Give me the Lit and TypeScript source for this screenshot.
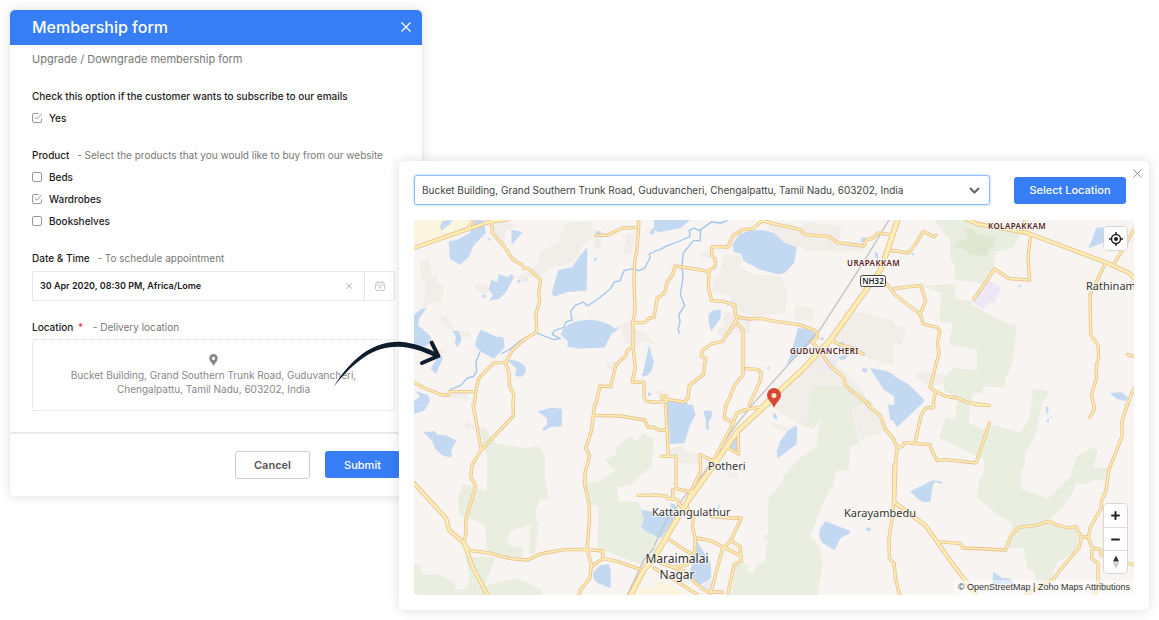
import { LitElement, html, svg, css } from "lit";
import { customElement } from "lit/decorators.js";

type Piece = [x: number, y: number, d: string];

/* Map geometry, kept per sector: offset of the sector, then the path in it (three units per pixel). */
const A: [number, number] = [0, 0];
const B: [number, number] = [720, 0];
const C: [number, number] = [1440, 0];
const D: [number, number] = [0, 570];
const E: [number, number] = [720, 570];
const F: [number, number] = [1440, 570];

const sand: Piece[] = [
  [...A, "M0 16H235L170 45L0 95Z"],
  [...D, "M665 545L720 552V580H650Z"],
  [...E, "M0 525L60 545L95 575H0Z"],
];

const built: Piece[] = [
  [...A, "M18 138L44 132L52 178L70 180L68 208L88 212L86 262L60 264L26 280L36 206L22 196Z"],
  [...A, "M182 212L196 206L222 212L224 234L212 238L186 228Z"],
  [...A, "M75 300L98 300L102 320L118 326L116 348L86 330Z M143 348L171 350L169 369L141 365Z M20 405L96 402L94 415L60 430L20 418Z"],
  [...A, "M455 25L535 18V70L505 92L490 128L455 152L410 158L385 180L340 192L322 206L308 190L350 166L372 148L380 108L430 88Z"],
  [...A, "M232 28L262 20L305 32L275 50L272 85L255 92L240 62Z M536 45L566 50L560 100L540 100Z M640 55L662 60L652 120L626 122Z"],
  [...A, "M622 330L650 315L662 345L690 355L720 380V390L690 380L670 390L632 385Z M578 440L604 440L606 462L575 462Z"],
  [...A, "M98 532L160 535L168 556L105 548Z"],
  [...B, "M330 22L400 25L440 40L455 22L560 35L555 80L620 82L630 110L560 112L455 108L440 95L400 105Z"],
  [...B, "M140 110H166L170 135L140 128Z M212 118L262 125L260 160L300 180L382 186L398 230L396 296L340 300L300 306L228 280L232 245L176 232L176 195L196 180Z"],
  [...B, "M210 290L290 312L288 358L262 350L212 366L190 362L190 340L208 335Z M424 272L480 280L476 322L420 315Z"],
  [...B, "M575 290L640 296L720 320V450L690 445L640 430L560 380L535 370Z"],
  [...B, "M480 420L520 430L570 470L620 520L650 570H360L380 540L430 500Z"],
  [...C, "M0 332L36 340L22 392L0 385Z M60 488L80 470L150 480L148 505L120 515L100 508Z"],
  [...B, "M5 526L25 525V540L5 540Z"],
  [...D, "M150 62L160 48L182 68L185 72L160 76Z"],
  [...E, "M40 135L85 122L95 140L135 145L132 180L66 175Z M222 200L252 205L248 222L222 218Z M350 52L402 68L398 82L355 66Z"],
  [...E, "M345 0H470L452 65L400 40Z M590 0H640L690 60V82L618 105Z"],
];

const green: Piece[] = [
  [...B, "M465 515L600 515L660 570H465Z"],
  [...C, "M122 16H220L250 30L380 55L358 100L305 110L300 160L282 208L184 195L182 160L168 125V75Z"],
  [...C, "M80 215L184 208V252L236 260L230 270L350 330L369 332L352 455L338 480L330 518L270 515L262 538L236 535L232 570H190L188 550L150 525L148 490L178 460L248 466L250 408L165 388L176 326L136 320L140 232Z"],
  [...C, "M418 522L468 530L440 570H410Z"],
  [...D, "M195 70L212 68L245 115L330 130L375 125L393 155V230L404 285L378 284L366 320V350L375 353L362 450L345 445L350 360L288 378L280 420L328 430L325 458L280 462L218 442L214 360L136 332L132 280L148 238L218 260L220 160Z"],
  [...D, "M155 458L243 458L212 545L310 520L384 555V580H0V477L20 482L22 510L70 508L120 530L125 555L160 550L166 515Z"],
  [...D, "M572 165L608 150L604 132L648 94L670 112L686 84L720 100L712 195L690 200L650 242L608 248L614 290L672 292L690 325L720 400V480L690 482L550 430L553 305L525 300V270L502 228L548 233L602 198Z"],
  [...E, "M0 402L15 400L5 450H0Z"],
  [...E, "M470 0H590L618 122L588 124L585 196L548 198L535 252L525 255L468 395L498 430L505 480L490 580H230L242 480L285 478L280 500L300 508L310 478L332 476L340 405L322 410L342 385L342 300L346 275L384 235L388 215L430 165L488 128L500 40L480 70L452 66Z"],
  [...F, "M186 0H228L225 56L270 75L300 60L380 85L405 45L410 0H445L422 95L395 145L392 185L380 195V252L462 282L530 215L548 155L596 128L612 138L598 188L644 190L640 228L602 225L575 240L545 235L540 260L490 325L460 345L545 375L552 392L550 440L492 470L478 495V535H425L422 500L400 492L388 430L345 432L355 355L310 330L250 280L255 225L270 205V165L136 98L155 38L186 45Z"],
];

const darkGreen: Piece[] = [
  [...C, "M210 40L240 44L246 55L306 70L298 98L285 105L280 125L230 120L215 105L180 95L200 75L214 76L222 58Z"],
];

const pale: Piece[] = [
  [...C, "M282 198L322 218L302 266L290 262L265 284L236 262Z"],
  [...B, "M520 425L545 422L552 440L530 468L498 465L510 440Z"],
  [...E, "M145 545L165 525L175 532L168 562L140 558Z"],
];

const water: Piece[] = [
  [...A, "M85 20L115 16L108 28L82 48L78 36Z M182 14H207L216 55L178 93L166 125L138 150L108 132L104 80L130 75L168 55Z"],
  [...A, "M292 45L326 52L293 90Z M220 68L232 74L226 80Z M310 197h8v7h-8z M333 193h6v7h-6z M205 240h10v9h-10z M540 130h8v8h-8z M546 50h14v10h-14z M702 534h9v9h-9z"],
  [...A, "M232 195L250 203L254 178L280 188L292 178L300 186L276 232L256 252L224 258L238 242L224 224Z"],
  [...A, "M433 165L475 158L492 130L520 98L518 228L460 232L420 246L413 236Z"],
  [...A, "M440 360Q450 318 530 315Q575 318 605 342L624 330L606 348L592 358L572 398L500 402L460 396L462 380Z"],
  [...A, "M0 300L20 284L38 279L15 312L12 332L50 365V380L36 395L0 400Z M115 348L135 350L143 372L132 398L122 388L126 366Z"],
  [...A, "M186 375L200 345L248 366L268 368L272 398L240 432L198 410L184 395Z"],
  [...A, "M282 436Q318 434 334 458Q338 480 318 487L302 482L308 465L290 445Z M50 462L75 420L87 430L66 478Z M5 530L40 540L48 555L42 570H0V560L18 545Z"],
  [...A, "M705 392L714 425L720 440L712 470L700 482L684 487L690 460Z M712 45L720 40V60L705 55Z"],
  [...B, "M0 16H108L80 40L20 52L0 48Z M235 90L255 60Q310 35 360 55L392 85L428 98L420 145L392 175L370 179L320 165L268 138L262 118L240 112Z"],
  [...B, "M163 300L175 288L201 284L200 310L172 350L165 330Z M432 340L470 345L485 360L470 385L430 425L398 452L415 405Z"],
  [...B, "M662 112L672 116V133L664 128Z M622 70L634 68L632 85L620 82Z M500 368h9v9h-9z M340 456h7v7h-7z M626 460L640 462L638 474L624 470Z"],
  [...B, "M545 385L565 382L585 400L582 410L560 402Z M550 428L580 420L575 432L562 438Z M648 460L695 468L720 480V545L690 525L670 495Z M32 556L60 556L98 562L104 572H36Z"],
  [...C, "M0 484L45 510L92 556L80 572H0Z M584 100L598 65L606 40L630 38L632 80L614 90Z M373 211h7v7h-7z M50 115L60 116L58 124Z M646 535L682 533L702 548L695 560L668 552Z"],
  [...D, "M0 0H42L30 18L0 28Z M28 82L62 80L72 90L96 92L128 108L112 135L114 155L104 158L82 150L62 130L55 110Z"],
  [...D, "M370 20L412 9L444 12L443 65L408 68L388 80L386 70L398 62L400 42L390 34Z M538 502L560 482L585 478L590 500V550L550 535L538 520Z M682 315L720 322V390L695 380L680 365L690 345Z"],
  [...E, "M36 0H116L125 30L108 60L92 115L48 118L46 80Z M148 18L172 18L175 30L163 55L166 75L156 74L155 45Z M358 22L370 35L368 45L358 38Z M225 128L248 85L254 100L250 145Z"],
  [...E, "M425 62L430 72L428 118L370 162L368 138L380 108L400 80Z M0 335L55 320L60 345L22 400L0 395Z M50 295L65 300L62 312L50 310Z M130 412L155 450L170 475L172 520L140 540L98 525L115 480Z"],
  [...E, "M514 350L588 378L586 388L560 400L542 436L505 415L495 395L498 372Z M636 368L650 370L650 380L638 378Z M192 300h4v30h-4z M702 0H720V50L708 45Z"],
  [...F, "M0 0H80L10 67L0 55Z M48 260L95 238Q115 220 145 232L144 237L122 232L115 248L110 290L92 293L75 285Z M298 502L325 520L350 522L362 538H295Z"],
  [...F, "M455 8L462 6L464 20L458 28Z M470 35L476 38L472 44Z M456 50L466 40L464 55Z"],
];

const rivers: Piece[] = [
  [...A, "M720 112L706 118L708 130L692 160L675 168L655 162L630 168L618 198L600 203L590 222L548 256L520 274L508 262L484 272L470 290L474 316L455 322L450 338L420 348L415 360L440 372"],
  [...A, "M440 372L418 375L366 354L320 378L290 402L262 418"],
  [...A, "M198 412L186 440L188 470L178 485L160 490L140 512L106 526"],
  [...B, "M220 18L200 25L172 22L140 45L138 78L118 78L88 115L84 150L87 190L79 240L92 272L75 300L78 322L72 345L77 357"],
  [...B, "M0 110L18 105L35 95L70 82L108 66L106 48L120 40L135 48L140 45"],
];

const roads: Piece[] = [
  [...A, "M162 42L176 16"],
  [...A, "M232 22L235 55L268 93L298 136L325 150L330 161L342 161L380 195L374 235L377 262L366 295L368 352L330 375L296 405L275 444L240 444L195 490L188 515L181 570"],
  [...A, "M275 444L285 475L287 515L299 538L297 575"],
  [...A, "M0 503L30 520L85 541L104 541L108 531L184 531"],
  [...A, "M546 62L582 61L625 40L674 38"],
  [...A, "M674 14L674 38L668 110L662 140L660 200L663 290L657 320L657 395L662 440L664 460L654 502L690 503L691 550L698 560L720 562"],
  [...A, "M657 324L692 324L706 310L720 309"],
  [...A, "M657 393L640 408L634 425L606 450L590 516L558 514L545 570"],
  [...B, "M0 308L10 250L32 235L40 200L55 182L63 154L155 168L165 178L163 220L173 258L205 260L242 271L244 298L252 307L285 313L320 311L350 318L435 330L480 346L490 355L490 370L474 382L500 410"],
  [...B, "M325 18L295 43L265 45L236 65L222 97L173 96L174 122L184 135L184 155L168 165L160 172"],
  [...B, "M325 18L370 30L440 45L452 60L525 65L550 84L630 94L637 75L655 72L672 55L710 60"],
  [...B, "M250 306L242 325L205 380L172 388L145 408L142 425L155 430L148 480L106 512L102 550L90 562L25 552L22 545L35 542L38 560L0 563"],
  [...B, "M244 322L267 345V480L242 512L218 570"],
  [...B, "M276 462L310 464L322 475L318 500L286 570"],
  [...B, "M530 377L562 392L595 400L628 418"],
  [...B, "M500 412L530 455L570 490L574 512L600 535L645 570"],
  [...B, "M696 205L720 235 M706 105L720 110"],
  [...C, "M0 108L42 115L58 98L88 50L118 66L126 62"],
  [...C, "M0 222L80 212L95 260L78 298L0 238"],
  [...C, "M78 298L88 328L130 338L138 348L130 385L135 415L108 518L125 530L155 545L190 550L220 563L285 572 M125 530L115 580"],
  [...C, "M240 253L302 163L345 192L407 196L402 125L410 60"],
  [...C, "M392 14L393 48 M720 45L658 152 M632 150L588 240L590 360L612 392L614 425L606 460L608 490L592 540L600 580 M720 425L700 420 M720 520L698 575"],
  [...D, "M177 0L202 136L298 34L298 0 M202 136L175 180L170 215L185 245L155 345L156 385L150 412L165 437L220 444L290 462L342 466L378 448L450 435L515 434L567 439L566 462L530 488"],
  [...D, "M542 0L538 32L532 80L515 130L526 150L522 175L514 200L512 240L526 300L526 350L519 432L532 480L528 520L500 555L494 575"],
  [...D, "M538 32L620 34L692 46L702 67L720 69 M566 462L610 470L690 498 M672 272H720"],
  [...E, "M35 0L43 155L22 155 M0 68L15 76H40 M43 155L66 155V252L112 262 M0 270L38 275L40 282L70 285L80 305L100 302 M56 255V280"],
  [...E, "M216 0L210 40L238 54L178 168L138 150L140 200L108 265L95 300 M238 54L248 25L275 15L290 12L330 5"],
  [...E, "M252 82L254 148L222 128 M100 310L120 335L115 365L124 400L122 440L100 480L60 488L20 475"],
  [...E, "M170 335L225 340L262 340L230 408L258 425L262 470L240 480L220 575 M124 400L170 408L262 455 M230 408L205 435L170 565 M40 402L112 448"],
  [...E, "M640 0L680 35L695 75L720 105 M720 180L718 320L705 400L706 460L720 480 M0 490L60 525L130 570 M20 475L90 500L130 540L160 562H205"],
  [...F, "M0 108L10 128L6 160L2 290 M10 128L25 126L32 113L62 117L108 120L112 135L130 168L155 165L246 175L286 55 M62 117L82 30L95 10L118 8L120 0 M240 0L285 3"],
  [...F, "M130 411L198 416L206 430L335 436L350 395L375 368L425 362L465 350L490 362L525 370L545 365L562 397L555 430L495 500L478 525L460 532L390 575"],
  [...F, "M600 0L600 15L588 38 M700 0L684 50V95L645 195L635 260L622 290V310L588 370L583 400L595 430L620 435V450L630 453 M562 397H583 M595 430L592 462L612 475V540L600 575 M700 475L720 480"],
  [...F, "M0 475L5 525L18 575"],
];

const mainRoads: Piece[] = [
  [...A, "M0 100L165 42L232 20L280 15"],
  [...C, "M210 10L250 28L400 55L640 145L705 175L725 195"],
  [...D, "M0 236L96 340L105 376L150 415L175 485L222 575"],
  [...F, "M0 292L95 363L185 490L250 575"],
];

const highway: Piece[] = [
  [...C, "M14 10L0 45"],
  [...B, "M725 35L680 165L530 375L440 470L330 572"],
  [...E, "M350 -12L250 80L182 178L94 300L12 440L0 460"],
  [...D, "M725 455L690 495L645 580"],
];

const rail: Piece[] = [
  [...B, "M706 14L630 140L498 345L430 420L295 570"],
  [...E, "M295 0L238 72L150 205L92 275L35 350L0 425"],
  [...D, "M720 430L690 465L636 580"],
];

const draw = (pieces: Piece[], cls: string) =>
  svg`<g class=${cls}>${pieces.map(([x, y, d]) => svg`<path transform="translate(${x} ${y})" d=${d}></path>`)}</g>`;

@customElement("area-map")
class AreaMap extends LitElement {
  static styles = css`
    :host {
      display: grid;
      position: relative;
      min-height: 375px;
      border-radius: 4px;
      overflow: hidden;
      background: #f8f4f2;
      font-family: "Noto Sans", sans-serif;
      font-weight: 400;
    }
    .canvas { width: 100%; height: 100%; display: block; grid-area: 1 / 1; }
    .sand { fill: #fbf5df; }
    .built { fill: #f1ede9; }
    .green { fill: #e9eee0; }
    .dark { fill: #dfe6d2; }
    .pale { fill: #eee8f6; }
    .water { fill: #c3d8f1; }
    .rivers { fill: none; stroke: #a0c5ee; stroke-width: 4; }
    .rail { fill: none; stroke: #c5c3c1; stroke-width: 4; }
    .casing, .surface { fill: none; stroke-linejoin: round; stroke-linecap: round; }
    .casing { stroke: #e9c08d; stroke-width: 10; }
    .surface { stroke: #fdeeb4; stroke-width: 5; }
    .main.casing { stroke-width: 13; }
    .main.surface { stroke-width: 8; }
    .wide.casing { stroke-width: 17; }
    .wide.surface { stroke-width: 12; }
    .place { font-size: 11px; fill: #333; stroke: #fff; stroke-opacity: .7; stroke-width: 2px; paint-order: stroke; }
    .town { font-size: 12px; }
    .village { font-size: 8px; font-weight: 600; fill: #522; letter-spacing: .05em; }
    .shield { fill: #fff; stroke: #444; }
    .route { font-size: 8px; font-weight: 600; fill: #222; }
    .corner {
      position: absolute; top: 7px; right: 7px;
    }
    .stack {
      position: absolute; right: 7px; bottom: 22px;
    }
    .corner, .stack {
      display: grid;
      border-radius: 4px;
      background: #fff;
      box-shadow: 0 0 0 1px #d8d5d2;
      overflow: hidden;
    }
    .tool {
      width: 23px; height: 23px; padding: 0; border: 0; box-sizing: border-box;
      display: grid; place-items: center; background: #fff; color: #222;
    }
    .tool + .tool { border-top: 1px solid #ddd; }
    .credit {
      position: absolute; right: 0; bottom: 0;
      padding: 0 4px; line-height: 15px; font-size: 9px;
      font-family: "Liberation Sans", sans-serif; color: #333;
      background: rgba(255, 255, 255, .5);
    }
    .credit a { color: inherit; text-decoration: none; }
  `;

  render() {
    return html`
      <svg class="canvas" viewBox="0 0 720 375" preserveAspectRatio="xMidYMid slice" role="img" aria-label="Map of Guduvancheri">
        <g transform="scale(.3333333) translate(0 -16)">
          ${draw(sand, "sand")} ${draw(built, "built")} ${draw(green, "green")}
          ${draw(darkGreen, "dark")} ${draw(pale, "pale")} ${draw(water, "water")}
          ${draw(rivers, "rivers")} ${draw(rail, "rail")}
          ${draw(roads, "casing")} ${draw(mainRoads, "main casing")} ${draw(highway, "wide casing")}
          ${draw(roads, "surface")} ${draw(mainRoads, "main surface")} ${draw(highway, "wide surface")}
        </g>
        <text class="place village" x="574" y="9">KOLAPAKKAM</text>
        <text class="place village" x="433" y="46">URAPAKKAM</text>
        <text class="place village" x="376" y="134">GUDUVANCHERI</text>
        <rect class="shield" x="446.500" y="55.500" width="25" height="11" rx="2"></rect>
        <text class="route" x="459" y="64" text-anchor="middle">NH32</text>
        <text class="place" x="672" y="70">Rathinam</text>
        <text class="place" x="294" y="250">Potheri</text>
        <text class="place" x="238" y="296">Kattangulathur</text>
        <text class="place" x="430" y="297">Karayambedu</text>
        <text class="place town" x="263" y="343" text-anchor="middle">Maraimalai</text>
        <text class="place town" x="263" y="359" text-anchor="middle">Nagar</text>
        <path d="M360 188C358 182 353 180 353 175A7 7 0 0 1 367 175C367 180 362 182 360 188Z" fill="#d9463a"></path>
        <circle cx="360" cy="175.500" r="2.500" fill="#fdeeb4"></circle>
      </svg>
      <div class="corner">
        <button class="tool" aria-label="My location">
          <svg width="14" height="14" viewBox="0 0 14 14" fill="none" stroke="currentColor" stroke-width="1.500">
            <circle cx="7" cy="7" r="4.500"></circle><circle cx="7" cy="7" r="1.300" fill="currentColor"></circle>
            <path d="M7 0V3M7 11V14M0 7H3M11 7H14"></path>
          </svg>
        </button>
      </div>
      <div class="stack">
        <button class="tool" aria-label="Zoom in">
          <svg width="9" height="9" viewBox="0 0 9 9" stroke="currentColor" stroke-width="2" stroke-linecap="round"><path d="M4.500 1V8M1 4.500H8"></path></svg>
        </button>
        <button class="tool" aria-label="Zoom out">
          <svg width="9" height="9" viewBox="0 0 9 9" stroke="currentColor" stroke-width="2" stroke-linecap="round"><path d="M1 4.500H8"></path></svg>
        </button>
        <button class="tool" aria-label="Reset north">
          <svg width="8" height="14" viewBox="0 0 8 14"><path d="M4 .5L7 6.500H1Z" fill="#333"></path><path d="M4 13.500L7 7.500H1Z" fill="#ccc"></path></svg>
        </button>
      </div>
      <div class="credit"><a href="#">© OpenStreetMap</a> | <a href="#">Zoho Maps Attributions</a></div>
    `;
  }
}

@customElement("app-root")
class AppRoot extends LitElement {
  static styles = css`
    :host {
      display: block; position: relative; min-height: 100vh;
      background: #fff; color: #1d1d1d;
      font: 500 10px/22px Inter, sans-serif;
    }
    * { box-sizing: border-box; }
    button, input, select { font: inherit; color: inherit; margin: 0; }
    button { padding: 0; border: 0; background: none; display: grid; place-items: center; }
    h1, p { margin: 0; }
    .stage { padding: 10px; }
    .card { border-radius: 5px; background: #fff; box-shadow: 0 0 12px rgba(0, 0, 0, .14); }
    .form { width: 412px; overflow: hidden; }
    .head {
      display: flex; align-items: center; justify-content: space-between;
      height: 35px; padding: 0 11px 2px 22px; background: #377df6; color: #fff;
    }
    .head h1 { font-size: 16px; font-weight: 500; line-height: 22px; }
    .body {
      display: flex; flex-direction: column; gap: 15px;
      padding: 3px 27px 21px 22px;
    }
    .intro, .hint { font-weight: 400; color: #777; }
    .intro { font-size: 11px; }
    .group { margin: 0; padding: 0; border: 0; min-width: 0; }
    .group legend { padding: 0; }
    .hint { margin-left: 5px; }
    .star { color: #f33; margin: 0 2px; }
    .check { display: flex; align-items: center; gap: 7px; }
    .tick { display: grid; width: 10px; height: 10px; }
    .tick input { appearance: none; grid-area: 1 / 1; width: 10px; height: 10px; }
    .tick svg { grid-area: 1 / 1; pointer-events: none; fill: none; stroke: #999; }
    .date { display: flex; height: 30px; margin-top: 2px; border: 1px solid #e6e6e6; border-radius: 2px; }
    .date input { flex: 1; min-width: 0; padding: 0 7px; border: 0; background: none; outline: none; font-size: 9px; font-weight: 600; }
    .date .clear { width: 30px; color: #888; }
    .date .pick { width: 30px; border-left: 1px solid #e6e6e6; color: #ccc; }
    .place {
      display: flex; flex-direction: column; align-items: center; justify-content: center; gap: 2px;
      width: 100%; height: 72px; margin-top: 1px; padding: 0 24px;
      border: 1px dotted #d8d8d8; border-radius: 2px;
      font-weight: 400; line-height: 14px; color: #888; text-align: center;
    }
    .foot {
      display: flex; justify-content: flex-end; gap: 15px;
      padding: 17px 22px; border-top: 2px solid #e9e9e9;
    }
    .btn { height: 28px; border-radius: 3px; font-size: 11px; font-weight: 600; }
    .plain { width: 75px; border: 1px solid #ccc; color: #555; }
    .primary { width: 75px; height: 27px; background: #377df6; color: #fff; font-weight: 500; }
    .picker {
      position: absolute; top: 161px; left: 399px; right: 10px;
      padding: 14px 15px 15px; display: flex; flex-direction: column; gap: 15px;
    }
    .bar { display: flex; align-items: center; gap: 24px; padding-right: 8px; }
    .address { flex: 1; display: grid; align-items: center; min-width: 0; }
    .address select {
      grid-area: 1 / 1; appearance: none; width: 100%; height: 30px; padding: 0 30px 0 7px;
      border: 1px solid #8fbdf8; border-radius: 3px; background: #fff; outline: none;
      box-shadow: 0 0 3px #a9cdfa; font-weight: 400; color: #444;
    }
    .address svg { grid-area: 1 / 1; justify-self: end; margin-right: 10px; pointer-events: none; }
    .wide { width: 112px; }
    .close { position: absolute; top: 6px; right: 6px; width: 12px; height: 12px; color: #888; }
    .arrow { position: absolute; top: 340px; left: 332px; pointer-events: none; }
  `;

  private cross(size: number, width = 1) {
    return html`<svg width=${size} height=${size} viewBox="0 0 10 10" fill="none" stroke="currentColor" stroke-width=${width}><path d="M.5.5L9.500 9.500M9.500.5L.5 9.500"></path></svg>`;
  }

  private check(label: string, checked: boolean) {
    return html`<label class="check">
      <span class="tick">
        <input type="checkbox" .checked=${checked} />
        <svg width="10" height="10" viewBox="0 0 10 10">
          ${checked
            ? svg`<path d="M6.500 .5H2Q.5 .5 .5 2V8Q.5 9.500 2 9.500H8Q9.500 9.500 9.500 8V5.500M2.500 4L4.800 6L9.500 1"></path>`
            : svg`<rect x=".5" y=".5" width="9" height="9" rx="1.500"></rect>`}
        </svg>
      </span>${label}
    </label>`;
  }

  render() {
    return html`
      <main class="stage">
        <form class="card form" @submit=${(e: Event) => e.preventDefault()}>
          <header class="head">
            <h1>Membership form</h1>
            <button type="button" aria-label="Close form">${this.cross(10, 1.3)}</button>
          </header>
          <div class="body">
            <p class="intro">Upgrade / Downgrade membership form</p>
            <fieldset class="group">
              <legend>Check this option if the customer wants to subscribe to our emails</legend>
              ${this.check("Yes", true)}
            </fieldset>
            <fieldset class="group">
              <legend>Product <span class="hint">- Select the products that you would like to buy from our website</span></legend>
              ${this.check("Beds", false)} ${this.check("Wardrobes", true)} ${this.check("Bookshelves", false)}
            </fieldset>
            <div class="group">
              <label for="when">Date &amp; Time <span class="hint">- To schedule appointment</span></label>
              <div class="date">
                <input id="when" type="text" .value=${"30 Apr 2020, 08:30 PM, Africa/Lome"} />
                <button type="button" class="clear" aria-label="Clear date">${this.cross(6)}</button>
                <button type="button" class="pick" aria-label="Open calendar">
                  <svg width="10" height="10" viewBox="0 0 10 10" fill="none" stroke="currentColor">
                    <rect x=".5" y="1.500" width="9" height="8" rx="1.500"></rect><path d="M.5 4H9.500M2.500 0V2.500M7.500 0V2.500M3.500 6H6.500L5 7.500Z"></path>
                  </svg>
                </button>
              </div>
            </div>
            <div class="group">
              <label for="where">Location <span class="star">*</span> <span class="hint">- Delivery location</span></label>
              <button type="button" class="place" id="where">
                <svg width="9" height="12" viewBox="0 0 9 12"><path fill="#888" fill-rule="evenodd" d="M4.500 0A4.300 4.300 0 0 1 8.800 4.300C8.800 7 5.500 9.500 4.500 12C3.500 9.500 .2 7 .2 4.300A4.300 4.300 0 0 1 4.500 0ZM4.500 2.800A1.600 1.600 0 1 0 4.500 6A1.600 1.600 0 1 0 4.500 2.800Z"></path></svg>
                <span>Bucket Building, Grand Southern Trunk Road, Guduvancheri, Chengalpattu, Tamil Nadu, 603202, India</span>
              </button>
            </div>
          </div>
          <footer class="foot">
            <button type="button" class="btn plain">Cancel</button>
            <button type="submit" class="btn primary">Submit</button>
          </footer>
        </form>
      </main>
      <section class="card picker" aria-label="Pick a location">
        <div class="bar">
          <div class="address">
            <select aria-label="Address">
              <option>Bucket Building, Grand Southern Trunk Road, Guduvancheri, Chengalpattu, Tamil Nadu, 603202, India</option>
            </select>
            <svg width="11" height="7" viewBox="0 0 11 7" fill="none" stroke="#666" stroke-width="2"><path d="M1 1L5.500 5.500L10 1"></path></svg>
          </div>
          <button class="btn primary wide">Select Location</button>
        </div>
        <area-map></area-map>
        <button class="close" aria-label="Close map">${this.cross(9)}</button>
      </section>
      <svg class="arrow" width="110" height="48" viewBox="36 45 330 144" aria-hidden="true">
        <path fill="#0e1c2b" d="M41 185C95 98 160 48 240 50C280 53 320 67 354 86L350 98C310 79 275 66 235 65C165 63 105 105 41 185Z"></path>
        <path fill="none" stroke="#0e1c2b" stroke-width="12" stroke-linecap="round" stroke-linejoin="round" d="M335 53L355 93L306 114"></path>
      </svg>
    `;
  }
}
